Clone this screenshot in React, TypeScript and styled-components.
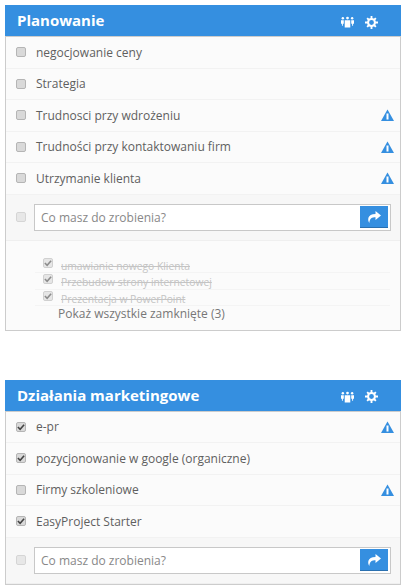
import React from "react";
import styled, { createGlobalStyle } from "styled-components";

const Global = createGlobalStyle`
  html, body { margin: 0; padding: 0; background: #fff; }
  body { font-family: "Open Sans", "Liberation Sans", sans-serif; }
`;
const Page = styled.div`
  display: flex; flex-direction: column; gap: 49px;
  padding: 5px 0 0 5px; width: 396px; height: 581px; overflow: hidden;
`;
const Card = styled.section`
  border: 1px solid #ccc; border-top: 0; background: #fbfbfb; flex: none;
`;
const Header = styled.header`
  height: 31px; margin: 0 -1px; padding: 0 23px 0 12px; background: #358fe0;
  border-bottom: 1px solid #ccc; display: flex; align-items: center; gap: 11px;
`;
const Title = styled.h2`
  flex: 1; margin: 0; color: #fff; font-size: 15px; font-weight: 700; line-height: 1;
`;
const HeaderIcon = styled.span`
  display: flex; margin-top: 3px;
`;
const Row = styled.div`
  height: 30.5px; border-bottom: 1px solid #f2f2f2; display: flex; align-items: center;
  padding: 0 6px 0 10px; color: #5f5f5f; font-size: 12px;
`;
const Box = styled.span<{ $faded?: boolean; $gap?: number }>`
  width: 8px; height: 8px; flex: none; border: 1px solid #b5b5b5; border-radius: 2px;
  background: #d9d9d9; margin-right: ${(p) => p.$gap ?? 10}px;
  display: flex; align-items: center; justify-content: center;
  opacity: ${(p) => (p.$faded ? 0.5 : 1)};
`;
const Label = styled.span` flex: 1; `;
const AddRow = styled.div`
  height: 45px; background: #f7f7f7; border-bottom: 1px solid #efefef;
  display: flex; align-items: center; padding: 0 9px 0 10px;
`;
const InputWrap = styled.div`
  flex: 1; height: 25px; background: #fff; border: 1px solid #c8c8c8;
  display: flex; align-items: center; justify-content: space-between; padding: 0 2px 0 6px;
`;
const Placeholder = styled.span` color: #888; font-size: 12px; `;
const Send = styled.button`
  width: 28px; height: 22px; border: 0; border-bottom: 1px solid #2a70b0; padding: 0; background: #358fe0;
  display: flex; align-items: center; justify-content: center;
`;
const Closed = styled.div` height: 73px; padding: 16px 0 0 29px; `;
const ClosedRow = styled.div`
  height: 15.5px; border-bottom: 1px solid #f4f4f4; display: flex; align-items: flex-start;
  margin-right: 10px; padding-left: 8px;
`;
const ClosedBox = styled(Box)`
  opacity: 0.6; margin: 1px 8px 0 0;
`;
const ClosedText = styled.span`
  color: #c4c4c4; font-size: 10.3px; line-height: 16px; text-decoration: line-through; padding-top: 1px;
`;
const ShowAll = styled.div`
  color: #777; font-size: 12px; line-height: 18px; padding-left: 23px; margin-top: -1.5px;
`;

const Check = () => (
  <svg width="9" height="8" viewBox="0 0 9 8"><path d="M1 4l2.5 2.5L8 1.5" fill="none" stroke="#444" strokeWidth="1.8" /></svg>
);
const Warn = () => (
  <svg width="13" height="12" viewBox="0 0 13 12">
    <path d="M6.5 0.5 13 12H0z" fill="#358fe0" />
    <rect x="5.5" y="4.5" width="2" height="6" fill="#fff" />
  </svg>
);
const People = () => (
  <svg width="13" height="12" viewBox="0 0 14 12" fill="#fff">
    <circle cx="2" cy="2" r="1.3" /><circle cx="12" cy="2" r="1.3" /><circle cx="7" cy="1.8" r="1.5" />
    <path d="M0 4h3v4H2v2H1V8H0zM11 4h3v4h-1v2h-1V8h-1zM4 4h6v8H4z" />
  </svg>
);
const Gear = () => (
  <svg width="13" height="13" viewBox="0 0 14 14">
    <circle cx="7" cy="7" r="3.7" fill="none" stroke="#fff" strokeWidth="2.2" />
    <path d="M6 0h2v3H6zM6 11h2v3H6zM0 6h3v2H0zM11 6h3v2h-3zM1.6 3l1.4-1.4 2 2L3.600 5zM9 10.400 10.400 9l2 2-1.400 1.400zM11 1.600 12.400 3l-2 2L9 3.600zM3.600 9 5 10.400l-2 2L1.600 11z" fill="#fff" />
  </svg>
);
const Share = () => (
  <svg width="14" height="12" viewBox="0 0 14 12">
    <path d="M8.500 0 14 4.500 8.500 9V6.200C5 6.200 2.800 7 2.300 12 .5 9 0 3 8.500 2.900z" fill="#fff" />
  </svg>
);

const AddTask = () => (
  <AddRow>
    <Box $faded $gap={8} />
    <InputWrap>
      <Placeholder>Co masz do zrobienia?</Placeholder>
      <Send aria-label="Dodaj"><Share /></Send>
    </InputWrap>
  </AddRow>
);
const Head = ({ title }: { title: string }) => (
  <Header>
    <Title>{title}</Title>
    <HeaderIcon><People /></HeaderIcon>
    <HeaderIcon><Gear /></HeaderIcon>
  </Header>
);
const Task = ({ text, done, warn }: { text: string; done?: boolean; warn?: boolean }) => (
  <Row>
    <Box>{done && <Check />}</Box>
    <Label>{text}</Label>
    {warn && <Warn />}
  </Row>
);

export default function App() {
  return (
    <Page>
      <Global />
      <Card>
        <Head title="Planowanie" />
        <Task text="negocjowanie ceny" />
        <Task text="Strategia" />
        <Task text="Trudnosci przy wdrożeniu" warn />
        <Task text="Trudności przy kontaktowaniu firm" warn />
        <Task text="Utrzymanie klienta" warn />
        <AddTask />
        <Closed>
          {["umawianie nowego Klienta", "Przebudow strony internetowej", "Prezentacja w PowerPoint"].map((t) => (
            <ClosedRow key={t}><ClosedBox><Check /></ClosedBox><ClosedText>{t}</ClosedText></ClosedRow>
          ))}
          <ShowAll>Pokaż wszystkie zamknięte (3)</ShowAll>
        </Closed>
      </Card>
      <Card>
        <Head title="Działania marketingowe" />
        <Task text="e-pr" done warn />
        <Task text="pozycjonowanie w google (organiczne)" done />
        <Task text="Firmy szkoleniowe" warn />
        <Task text="EasyProject Starter" done />
        <AddTask />
      </Card>
    </Page>
  );
}
